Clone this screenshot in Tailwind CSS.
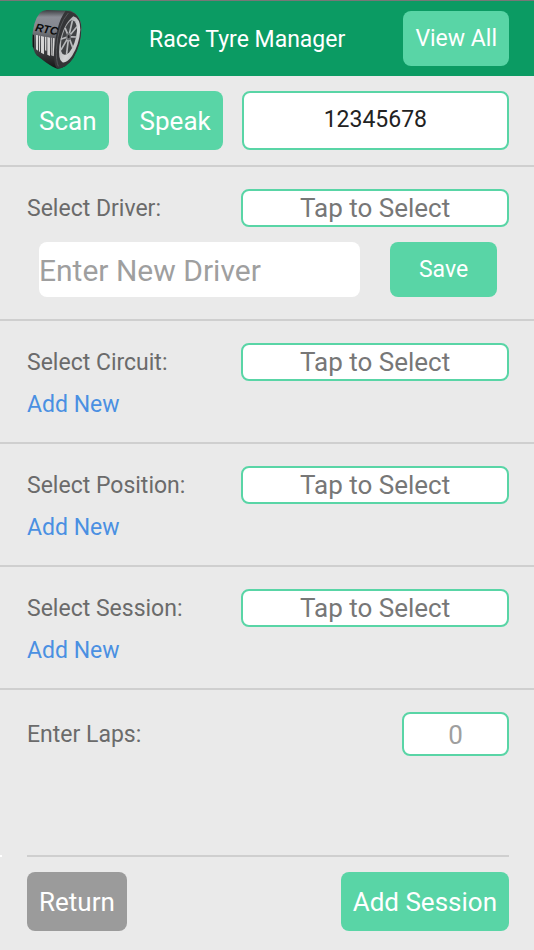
<!DOCTYPE html>
<html lang="en">
<head>
    <meta charset="UTF-8">
    <meta name="viewport" content="width=device-width, initial-scale=1.0">
    <title>Race Tyre Manager</title>
    <script src="https://cdn.jsdelivr.net/npm/@tailwindcss/browser@4"></script>
</head>
<body class="min-h-screen flex flex-col bg-[#eaeaea] text-[#6b6b6b] font-[Roboto,sans-serif]">

    <!-- Header -->
    <header class="h-[76px] flex items-center pl-[27px] pr-[25px] bg-[#0b9b63] border-t border-[#777777]">
        <svg class="w-16 h-16 shrink-0" viewBox="21 18 192 192" role="img" aria-label="RTC logo">
            <defs>
                <linearGradient id="tread" x1="0" y1="0" x2="0" y2="1">
                    <stop offset="0" stop-color="#3c3e42"/>
                    <stop offset=".12" stop-color="#8b8e96"/>
                    <stop offset=".3" stop-color="#85888f"/>
                    <stop offset=".5" stop-color="#55575b"/>
                    <stop offset=".75" stop-color="#38393b"/>
                    <stop offset="1" stop-color="#141414"/>
                </linearGradient>
                <linearGradient id="rim" x1="0" y1="0" x2="1" y2="1">
                    <stop offset="0" stop-color="#8d8f92"/>
                    <stop offset=".6" stop-color="#d4d5d6"/>
                    <stop offset="1" stop-color="#a2a3a5"/>
                </linearGradient>
            </defs>
            <path d="M60 35 Q66 29 80 27 L152 29 Q183 40 184 82 Q184 128 160 170 Q140 200 112 203 Q98 202 50 163 Q38 150 37 118 Q37 62 60 35Z" fill="url(#tread)"/>
            <path d="M137 29 Q182 32 184 80 Q184 130 160 171 Q140 201 113 203 Q101 198 103 158 Q106 70 137 29Z" fill="#343537"/>
            <path d="M145 36 Q114 70 109 145 Q108 180 115 196" fill="none" stroke="#55575a" stroke-width="3"/>
            <path d="M160 46 Q181 52 181 86 Q178 130 156 165 Q140 187 127 184 Q114 176 118 134 Q128 70 160 46Z" fill="url(#rim)"/>
            <path d="M156 57 Q172 61 171 90 Q167 131 147 155 Q130 169 124 152 Q119 121 134 85 Q144 62 156 57Z" fill="#414345"/>
            <g stroke="#b6b8ba" stroke-width="5" stroke-linecap="round">
                <path d="M146 107 L157 60M146 107 L170 78M146 107 L169 108M146 107 L158 139M146 107 L140 157M146 107 L124 145M146 107 L124 114M146 107 L136 83"/>
            </g>
            <ellipse cx="146" cy="107" rx="7" ry="11" fill="#6c6e71"/>
            <ellipse cx="146" cy="107" rx="3" ry="5" fill="#252628"/>
            <text x="44" y="90" transform="rotate(11 44 90)" font-family="Liberation Sans, sans-serif" font-size="34" font-style="italic" font-weight="bold" fill="#0c0c0c">RTC</text>
            <path d="M38 100 L42 103 L42 143 L38 136Z" fill="#141414"/>
            <g fill="#d5d5d5">
                <path d="M48 102 L54 103 L54 149 L48 145Z"/>
                <path d="M57 104 L60 104 L60 153 L57 151Z"/>
                <path d="M63 105 L72 107 L72 160 L63 155Z"/>
                <path d="M75 107 L79 108 L79 150 L75 148Z"/>
                <path d="M82 108 L90 110 L90 165 L82 161Z"/>
                <path d="M93 110 L95 110 L95 164 L93 163Z"/>
                <path d="M99 111 L104 112 L101 166 L97 164Z"/>
            </g>
        </svg>
        <h1 class="flex-1 pt-[2px] text-center text-[23px] leading-8 text-white">Race Tyre Manager</h1>
        <button type="button" class="h-[55px] px-3 pt-[2px] rounded-lg bg-[#59d5a6] text-[23px] text-white">View All</button>
    </header>

    <main>
        <!-- Tyre code -->
        <section class="flex gap-[19px] pl-[27px] pr-[25px] py-[15px] border-b-2 border-[#cfcfcf]">
            <button type="button" class="h-[59px] px-3 pt-[2px] rounded-lg bg-[#59d5a6] text-[26px] text-white">Scan</button>
            <button type="button" class="h-[59px] px-3 pt-[2px] rounded-lg bg-[#59d5a6] text-[26px] text-white">Speak</button>
            <input type="text" value="12345678" aria-label="Tyre code" class="flex-1 min-w-0 h-[59px] pb-[2px] rounded-lg border-2 border-[#59d5a6] bg-white text-center text-[23px] text-[#222222]">
        </section>

        <!-- Driver -->
        <section class="pl-[27px] pr-[25px] pt-[22px] pb-[22px] border-b-2 border-[#cfcfcf]">
            <div class="flex items-center justify-between">
                <label for="driver" class="pt-[2px] text-[23px] leading-8">Select Driver:</label>
                <select id="driver" class="appearance-none w-5/9 h-[38px] rounded-lg border-2 border-[#59d5a6] bg-white text-center text-[26px] leading-8 text-[#777777]">
                    <option>Tap to Select</option>
                </select>
            </div>
            <div class="flex gap-[30px] px-3 mt-[15px]">
                <input type="text" placeholder="Enter New Driver" aria-label="New driver" class="flex-1 min-w-0 h-[55px] pt-[2px] rounded-lg bg-white text-[30px] placeholder:text-[#9f9f9f]">
                <button type="button" class="w-[107px] h-[55px] pt-[2px] rounded-lg bg-[#59d5a6] text-[23px] text-white">Save</button>
            </div>
        </section>

        <!-- Circuit -->
        <section class="pl-[27px] pr-[25px] pt-[22px] pb-[21px] border-b-2 border-[#cfcfcf]">
            <div class="flex items-center justify-between">
                <label for="circuit" class="pt-[2px] text-[23px] leading-8">Select Circuit:</label>
                <select id="circuit" class="appearance-none w-5/9 h-[38px] rounded-lg border-2 border-[#59d5a6] bg-white text-center text-[26px] leading-8 text-[#777777]">
                    <option>Tap to Select</option>
                </select>
            </div>
            <a href="#" class="block w-fit mt-2 text-[23px] leading-8 text-[#4a90e2]">Add New</a>
        </section>

        <!-- Position -->
        <section class="pl-[27px] pr-[25px] pt-[22px] pb-[21px] border-b-2 border-[#cfcfcf]">
            <div class="flex items-center justify-between">
                <label for="position" class="pt-[2px] text-[23px] leading-8">Select Position:</label>
                <select id="position" class="appearance-none w-5/9 h-[38px] rounded-lg border-2 border-[#59d5a6] bg-white text-center text-[26px] leading-8 text-[#777777]">
                    <option>Tap to Select</option>
                </select>
            </div>
            <a href="#" class="block w-fit mt-2 text-[23px] leading-8 text-[#4a90e2]">Add New</a>
        </section>

        <!-- Session -->
        <section class="pl-[27px] pr-[25px] pt-[22px] pb-[21px] border-b-2 border-[#cfcfcf]">
            <div class="flex items-center justify-between">
                <label for="session" class="pt-[2px] text-[23px] leading-8">Select Session:</label>
                <select id="session" class="appearance-none w-5/9 h-[38px] rounded-lg border-2 border-[#59d5a6] bg-white text-center text-[26px] leading-8 text-[#777777]">
                    <option>Tap to Select</option>
                </select>
            </div>
            <a href="#" class="block w-fit mt-2 text-[23px] leading-8 text-[#4a90e2]">Add New</a>
        </section>

        <!-- Laps -->
        <section class="flex items-center justify-between pl-[27px] pr-[25px] py-[22px]">
            <label for="laps" class="pt-[2px] text-[23px] leading-8">Enter Laps:</label>
            <input type="text" id="laps" inputmode="numeric" placeholder="0" class="w-2/9 h-[44px] pt-[2px] rounded-lg border-2 border-[#59d5a6] bg-white text-center text-[26px] placeholder:text-[#9f9f9f]">
        </section>
    </main>

    <!-- Footer actions -->
    <footer class="relative mt-auto pl-[27px] pr-[25px] pb-[19px]">
        <span class="absolute left-0 top-0 w-[2px] h-[2px] bg-white"></span>
        <div class="flex justify-between pt-[15px] border-t-2 border-[#cfcfcf]">
            <button type="button" class="h-[59px] px-3 pt-[2px] rounded-lg bg-[#9b9b9b] text-[26px] text-white">Return</button>
            <button type="button" class="h-[59px] px-3 pt-[2px] rounded-lg bg-[#59d5a6] text-[26px] text-white">Add Session</button>
        </div>
    </footer>
</body>
</html>
